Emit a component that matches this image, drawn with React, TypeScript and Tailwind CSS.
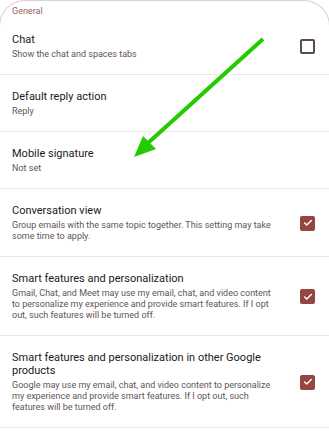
import { Check } from "lucide-react"

type Row = {
  title: string
  sub: string
  box?: "on" | "off"
}

const rows: Row[] = [
  { title: "Chat", sub: "Show the chat and spaces tabs", box: "off" },
  { title: "Default reply action", sub: "Reply" },
  { title: "Mobile signature", sub: "Not set" },
  {
    title: "Conversation view",
    sub: "Group emails with the same topic together. This setting may take some time to apply.",
    box: "on",
  },
  {
    title: "Smart features and personalization",
    sub: "Gmail, Chat, and Meet may use my email, chat, and video content to personalize my experience and provide smart features. If I opt out, such features will be turned off.",
    box: "on",
  },
  {
    title: "Smart features and personalization in other Google products",
    sub: "Google may use my email, chat, and video content to personalize my experience and provide smart features. If I opt out, such features will be turned off.",
    box: "on",
  },
]

function Box({ on }: { on: boolean }) {
  if (on) {
    return (
      <div className="w-[15px] h-[15px] rounded-[2px] bg-[#974540] flex items-center justify-center shrink-0">
        <Check size={10} strokeWidth={3.5} className="text-white" />
      </div>
    )
  }
  return <div className="w-[15px] h-[15px] rounded-[2px] border-2 border-[#5b4b4a] shrink-0" />
}

function Item({ row }: { row: Row }) {
  return (
    <div className="flex items-center border-b border-[#ebe7e6] pl-3 pr-[14px] pt-[15px] pb-[14px]">
      <div className="flex-1 pr-[22px]">
        <div className="text-[11px] leading-[13px] text-[#211a19]">{row.title}</div>
        <div className="text-[9px] leading-[11px] text-[#5e5655] mt-[3px]">{row.sub}</div>
      </div>
      {row.box && <Box on={row.box === "on"} />}
    </div>
  )
}

export default function App() {
  return (
    <div className="relative w-[329px] h-[440px] overflow-hidden bg-white font-['Roboto',sans-serif]">
      <div className="absolute -left-px -right-px top-0 h-[60px] rounded-t-[26px] border border-b-0 border-[#d6d3d2] pointer-events-none" />
      <div className="pt-[4px]">
        <div className="px-3 text-[9px] leading-[14px] text-[#a0625b]">General</div>
        {rows.map((r) => (
          <Item key={r.title} row={r} />
        ))}
      </div>
      <svg className="absolute left-0 top-0 pointer-events-none" width="329" height="440" viewBox="0 0 329 440">
        <line x1="263" y1="39" x2="148" y2="143" stroke="#22cc00" strokeWidth="4" />
        <polygon points="134,157 143,136 156,149" fill="#22cc00" />
      </svg>
    </div>
  )
}
